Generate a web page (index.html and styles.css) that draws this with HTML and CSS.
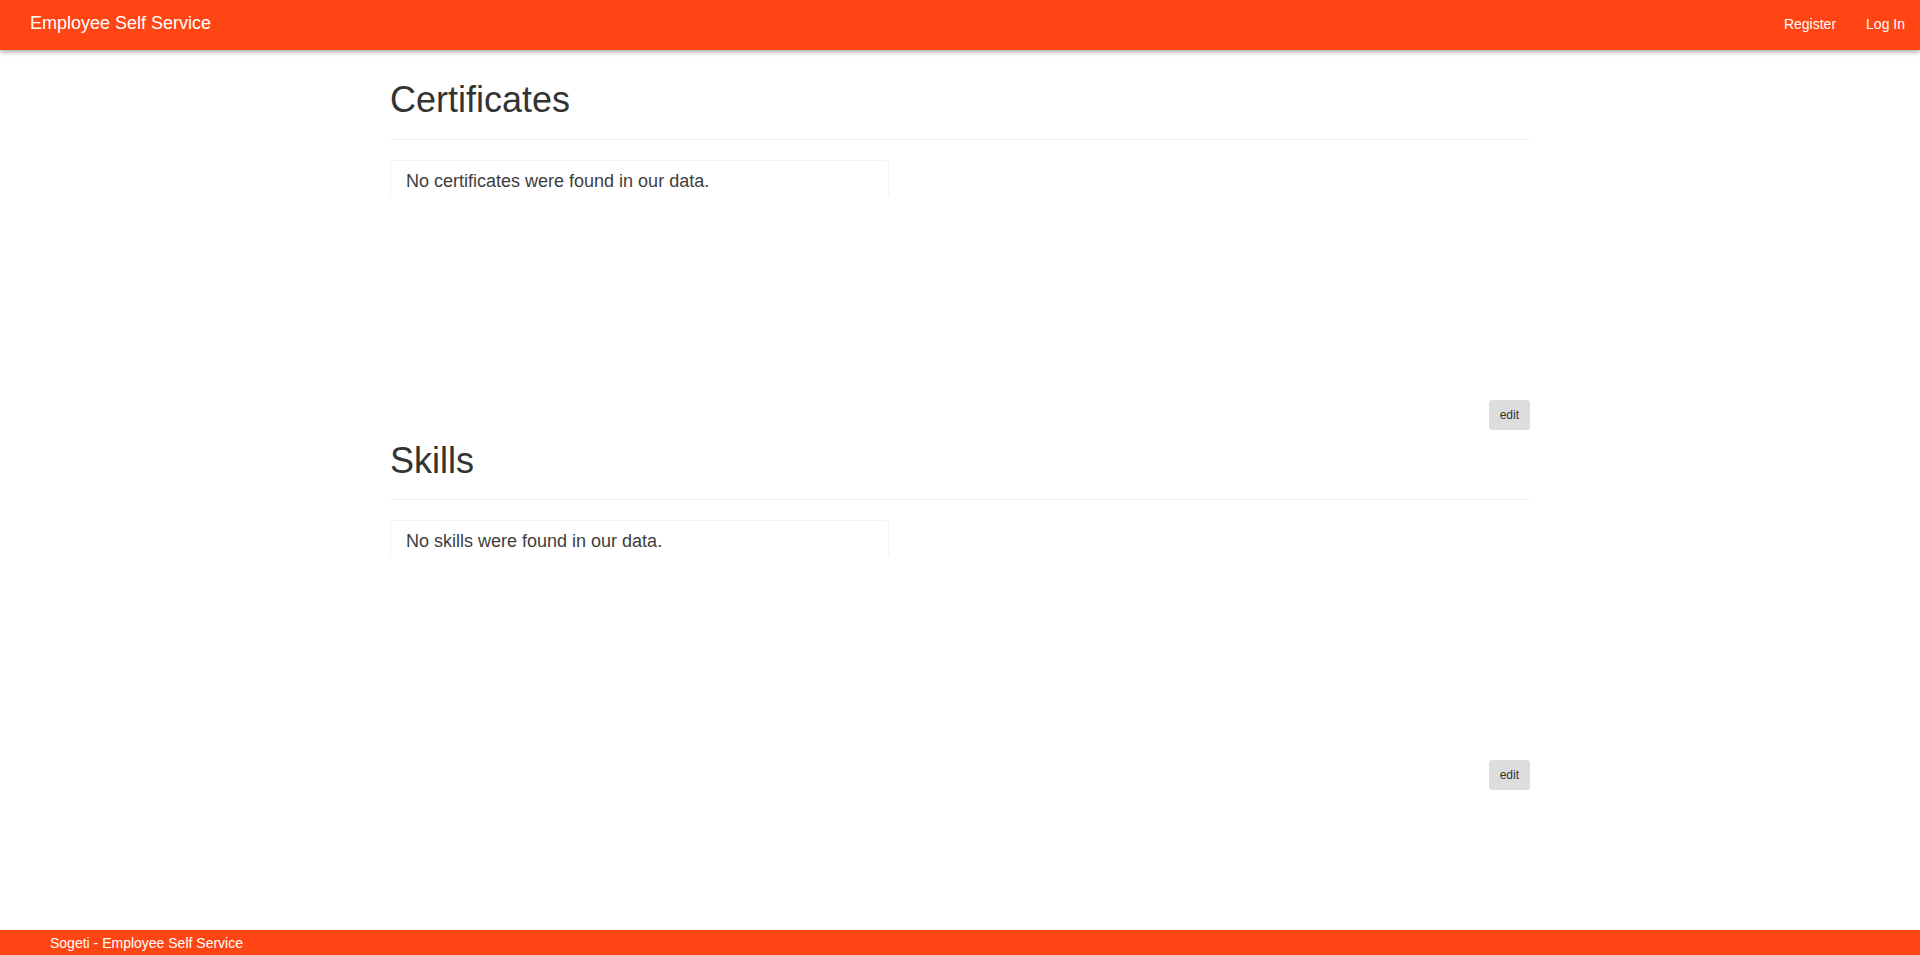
FILE: index.html
```html
<!DOCTYPE html>
<html lang="en">
<head>
<meta charset="utf-8">
<title>Employee Self Service</title>
<link rel="stylesheet" href="styles.css">
</head>
<body>
<header class="navbar">
  <a class="brand" href="#">Employee Self Service</a>
  <nav class="nav-right">
    <a class="nav-link" href="#">Register</a>
    <a class="nav-link" href="#">Log In</a>
  </nav>
</header>
<main class="container">
  <section class="section">
    <div class="page-header"><h1>Certificates</h1></div>
    <div class="list-area">
      <div class="panel">No certificates were found in our data.</div>
    </div>
    <div class="actions"><button class="btn-edit">edit</button></div>
  </section>
  <section class="section">
    <div class="page-header"><h1>Skills</h1></div>
    <div class="list-area">
      <div class="panel">No skills were found in our data.</div>
    </div>
    <div class="actions"><button class="btn-edit">edit</button></div>
  </section>
</main>
<footer class="footer">Sogeti - Employee Self Service</footer>
</body>
</html>
```

FILE: styles.css
```css
* { box-sizing: border-box; }
html, body { margin: 0; padding: 0; }
body {
  font-family: "Liberation Sans", Arial, Helvetica, sans-serif;
  font-size: 14px;
  color: #333;
  background: #fff;
  min-height: 100vh;
  display: flex;
  flex-direction: column;
}
.navbar {
  height: 50px;
  background: #ff4514;
  display: flex;
  align-items: center;
  justify-content: space-between;
  padding: 0 0 0 15px;
  box-shadow: 0 2px 5px rgba(0, 0, 0, 0.35);
  position: relative;
  z-index: 1;
}
.brand {
  color: #fff;
  text-decoration: none;
  font-size: 18px;
  line-height: 20px;
  padding: 11px 15px 15px;
}
.nav-right { display: flex; }
.nav-link {
  color: #fff;
  text-decoration: none;
  font-size: 14px;
  line-height: 20px;
  padding: 14px 15px 16px;
}
.container {
  width: 1140px;
  margin: 0 auto;
  padding-top: 30px;
}
.page-header {
  border-bottom: 1px solid #eee;
  padding-bottom: 19px;
  margin-bottom: 20px;
}
.section + .section .page-header { margin-top: 11px; }
.page-header h1 {
  margin: 0;
  font-size: 36px;
  font-weight: 400;
  line-height: 1.1;
  color: #333;
}
.list-area { height: 240px; }
.panel {
  width: 499px;
  height: 37px;
  border: 1px solid #f3f3f3;
  border-bottom: none;
  border-radius: 4px 4px 0 0;
  padding: 10px 15px 6px;
  font-size: 18px;
  line-height: 20px;
  color: #3d3d3d;
}
.actions { display: flex; justify-content: flex-end; }
.btn-edit {
  font-family: "Liberation Sans", Arial, sans-serif;
  font-size: 12px;
  line-height: 18px;
  padding: 5px 10px;
  height: 30px;
  background: #ddd;
  border: 1px solid #ddd;
  border-radius: 3px;
  color: #333;
}
.footer {
  margin-top: auto;
  height: 25px;
  background: #ff4514;
  color: #fff;
  font-size: 14px;
  line-height: 20px;
  padding: 3px 50px 2px;
}
```
